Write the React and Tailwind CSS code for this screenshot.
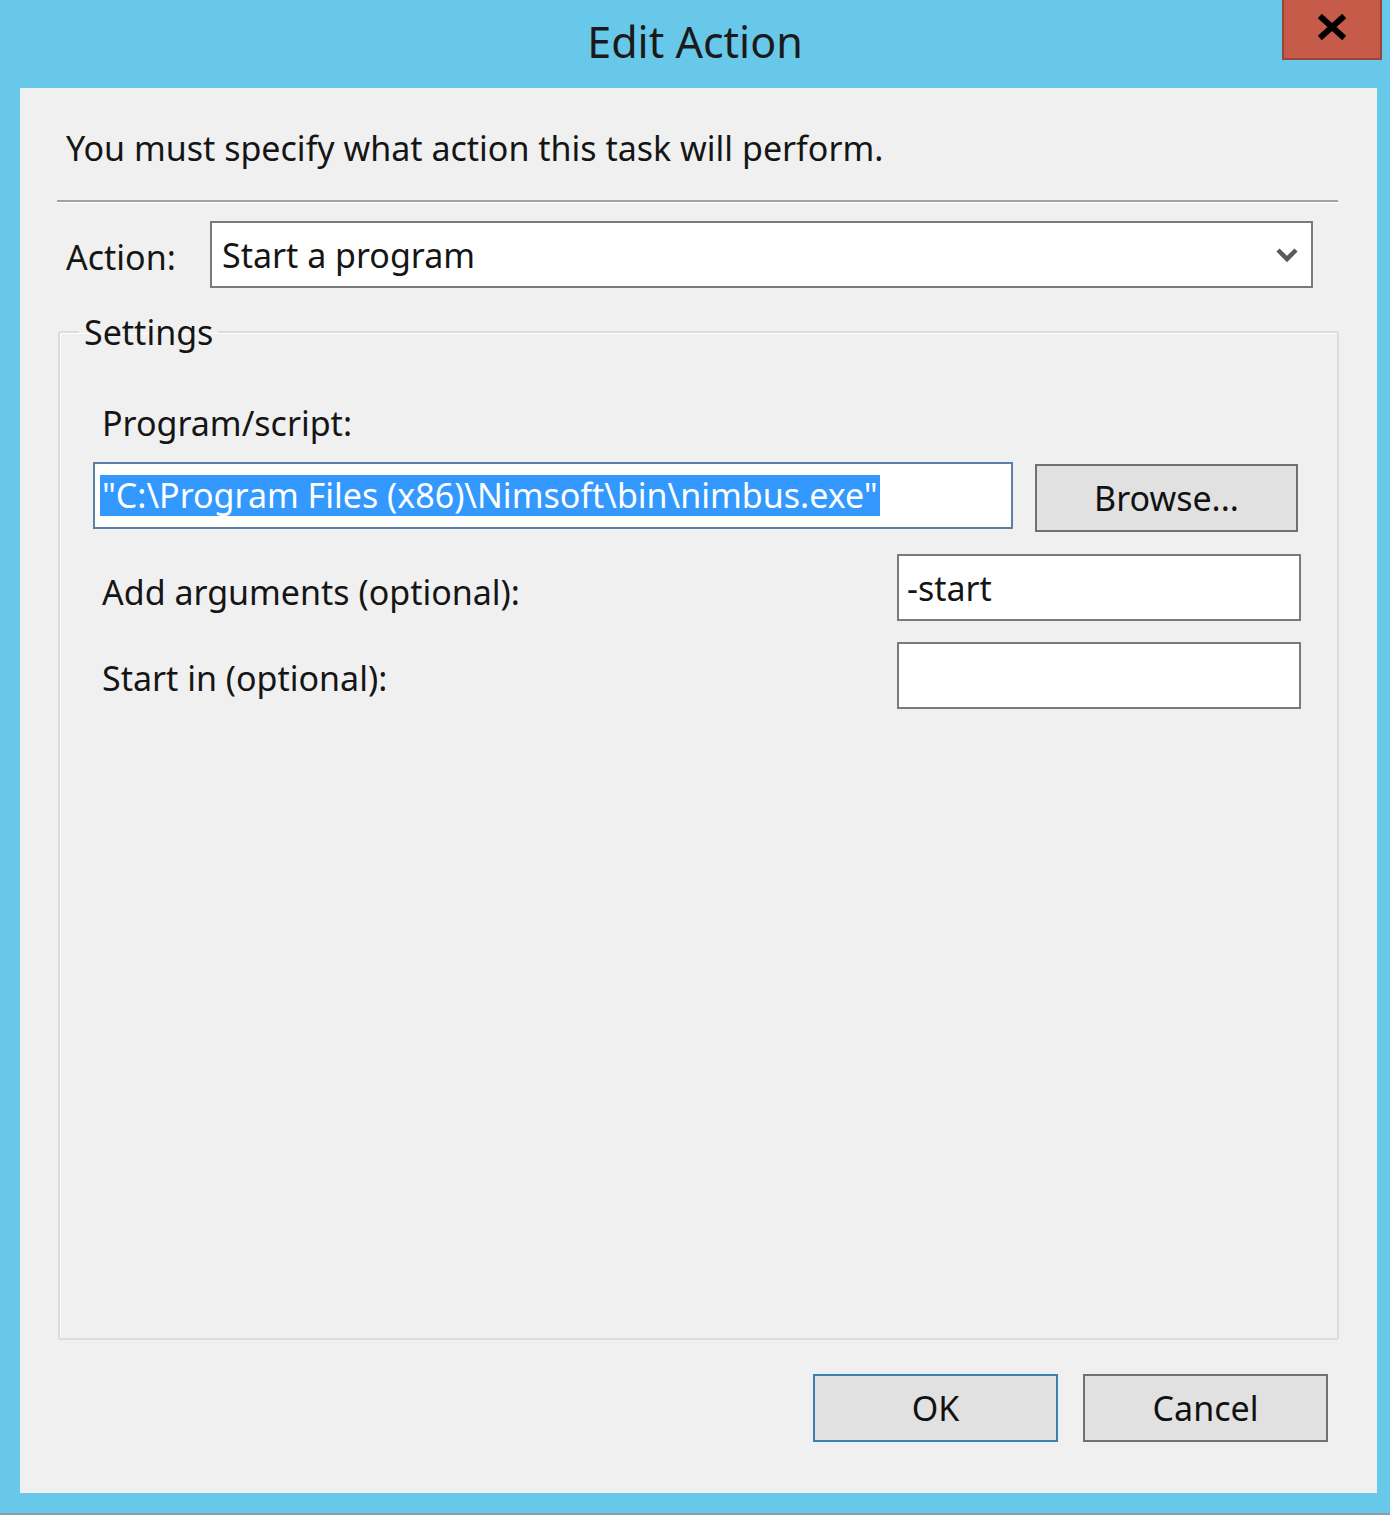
import React from 'react'

const font = { fontFamily: '"Noto Sans", "Open Sans", sans-serif' }

function CloseGlyph() {
  return (
    <svg width="30" height="26" viewBox="0 0 30 26">
      <path d="M5 4 L25 22 M25 4 L5 22" stroke="#000" strokeWidth="6" strokeLinecap="square" fill="none" />
    </svg>
  )
}

function Chevron() {
  return (
    <svg width="24" height="18" viewBox="0 0 24 18">
      <path d="M3 4 L12 13 L21 4" stroke="#5a5a5a" strokeWidth="4.5" fill="none" />
    </svg>
  )
}

function WinButton({ children, focused }) {
  return (
    <button
      className={
        focused
          ? 'w-[245px] h-[68px] bg-[#e1e1e1] border-2 border-[#3c7fb1] text-[34px] leading-[40px] text-[#111]'
          : 'w-[245px] h-[68px] bg-[#e1e1e1] border-2 border-[#707070] text-[34px] leading-[40px] text-[#111]'
      }
    >
      {children}
    </button>
  )
}

export default function App() {
  return (
    <div className="w-[1390px] h-[1515px] bg-[#68c8ea] flex flex-col border-b-2 border-[#8aa0ab]" style={font}>
      {/* title bar */}
      <div className="h-[88px] grid grid-cols-[1fr_auto_1fr] items-start">
        <div />
        <div className="pt-[12px] text-[43px] leading-[60px] text-[#1a1a1a]">Edit Action</div>
        <div className="flex justify-end pr-[8px]">
          <div className="w-[100px] h-[60px] bg-[#c75b4a] border-2 border-t-0 border-[#9a4336] flex items-center justify-center pb-[4px]">
            <CloseGlyph />
          </div>
        </div>
      </div>

      {/* client area */}
      <div className="ml-[20px] w-[1357px] h-[1405px] bg-[#f0f0f0] flex flex-col text-[#151515]">
        <p className="ml-[46px] mt-[40px] text-[34px] leading-[40px]">You must specify what action this task will perform.</p>

        <div className="ml-[37px] mt-[32px] w-[1281px] h-[3px] border-t-2 border-[#a0a0a0] border-b border-b-white" />

        <div className="mt-[18px] flex items-center">
          <span className="ml-[46px] w-[144px] text-[34px] leading-[40px] mt-[4px]">Action:</span>
          <div className="w-[1103px] h-[67px] bg-white border-2 border-[#7a7a7a] flex items-center justify-between pl-[10px] pr-[12px]">
            <span className="text-[34px] leading-[40px]">Start a program</span>
            <Chevron />
          </div>
        </div>

        <fieldset className="ml-[38px] mt-[24px] w-[1281px] flex-1 border-2 border-[#dcdcdc] rounded-[3px] shadow-[inset_1px_1px_0_#fff]">
          <legend className="ml-[19px] px-[5px] text-[34px] leading-[40px]">Settings</legend>

          <div className="pl-[33px] pr-[36px] pt-[51px] flex flex-col">
            <span className="ml-[9px] text-[34px] leading-[40px]">Program/script:</span>

            <div className="mt-[19px] flex items-start">
              <div className="w-[920px] h-[67px] bg-white border-2 border-[#5b7fa6] flex items-center pl-[5px]">
                <span className="bg-[#3399ff] text-white text-[34px] leading-[41px] pl-[2px] pr-[2px]">
                  "C:\Program Files (x86)\Nimsoft\bin\nimbus.exe"
                </span>
              </div>
              <button className="ml-[22px] mt-[2px] w-[263px] h-[68px] bg-[#e1e1e1] border-2 border-[#707070] text-[34px] leading-[40px] text-[#111]">
                Browse...
              </button>
            </div>

            <div className="mt-[22px] flex items-center justify-between">
              <span className="ml-[9px] text-[34px] leading-[40px] mt-[8px]">Add arguments (optional):</span>
              <div className="w-[404px] h-[67px] bg-white border-2 border-[#7a7a7a] flex items-center pl-[8px]">
                <span className="text-[34px] leading-[40px]">-start</span>
              </div>
            </div>

            <div className="mt-[21px] flex items-center justify-between">
              <span className="ml-[9px] text-[34px] leading-[40px] mt-[4px]">Start in (optional):</span>
              <div className="w-[404px] h-[67px] bg-white border-2 border-[#7a7a7a]" />
            </div>
          </div>
        </fieldset>

        <div className="mt-[34px] mb-[51px] mr-[49px] flex justify-end gap-[25px]">
          <WinButton focused>OK</WinButton>
          <WinButton>Cancel</WinButton>
        </div>
      </div>
    </div>
  )
}
